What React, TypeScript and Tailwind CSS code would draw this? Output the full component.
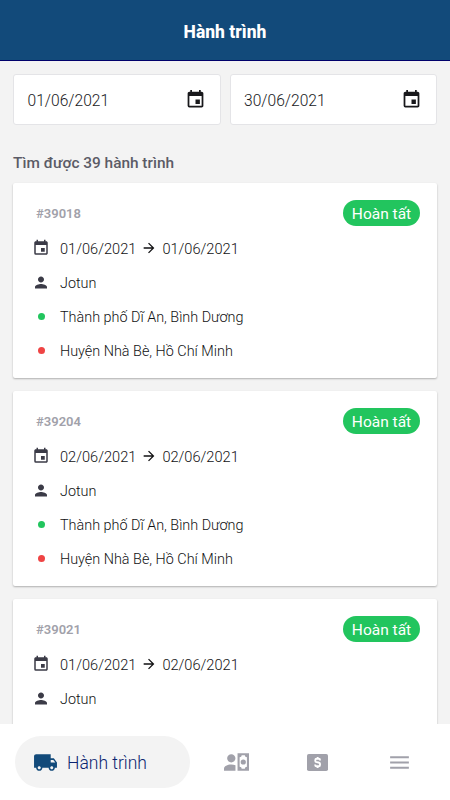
import React from 'react';
import { MdArrowForward, MdEvent, MdLocalShipping, MdMenu, MdPerson } from 'react-icons/md';

interface Trip {
  id: string;
  startDate: string;
  endDate: string;
  customer: string;
  from?: string;
  to?: string;
  status: string;
}

const trips: Trip[] = [
  {
    id: '39018',
    startDate: '01/06/2021',
    endDate: '01/06/2021',
    customer: 'Jotun',
    from: 'Thành phố Dĩ An, Bình Dương',
    to: 'Huyện Nhà Bè, Hồ Chí Minh',
    status: 'Hoàn tất',
  },
  {
    id: '39204',
    startDate: '02/06/2021',
    endDate: '02/06/2021',
    customer: 'Jotun',
    from: 'Thành phố Dĩ An, Bình Dương',
    to: 'Huyện Nhà Bè, Hồ Chí Minh',
    status: 'Hoàn tất',
  },
  {
    id: '39021',
    startDate: '01/06/2021',
    endDate: '02/06/2021',
    customer: 'Jotun',
    status: 'Hoàn tất',
  },
];

const AccountCashIcon: React.FC<{ className?: string }> = ({ className }) => (
  <svg viewBox="0 0 24 24" fill="currentColor" fillRule="evenodd" className={className}>
    <path d="M11 8C11 10.21 9.21 12 7 12S3 10.21 3 8s1.79-4 4-4 4 1.79 4 4M11 14.72V20H0v-2c0-2.21 3.13-4 7-4 1.5 0 2.87.27 4 .72M24 20H13V3h11v17m-8-8.5a2.5 2.5 0 0 1 5 0 2.5 2.5 0 0 1-5 0M22 7a2 2 0 0 1-2-2h-3a2 2 0 0 1-2 2v9a2 2 0 0 1 2 2h3a2 2 0 0 1 2-2V7z" />
  </svg>
);

const DollarBoxIcon: React.FC<{ className?: string }> = ({ className }) => (
  <svg viewBox="0 0 21 17" className={className}>
    <rect width="21" height="17" rx="1.8" fill="currentColor" />
    <path
      d="M13 6.5V5.9C13 5.1 12.5 4.7 11.7 4.7H9.7C8.8 4.7 8.3 5.2 8.3 5.9V6.9C8.3 7.7 8.8 8 9.7 8.1L11.5 8.5C12.5 8.7 13 9.1 13 9.9V10.9C13 11.8 12.4 12.2 11.6 12.2H9.7C8.8 12.2 8.2 11.8 8.2 10.9V10.4M10.6 3V5M10.6 12V14"
      fill="none"
      stroke="white"
      strokeWidth="1.9"
    />
  </svg>
);

const DateField: React.FC<{ value: string }> = ({ value }) => (
  <button className="flex h-[51px] flex-1 items-center justify-between rounded-[3px] border border-[#e4e4e7] bg-white pr-3.5 pl-[13.5px] text-[15.6px] font-[350] text-[#18181b]">
    <span className="pt-[4px]">{value}</span>
    <MdEvent className="size-[21px]" />
  </button>
);

const Row: React.FC<{ icon: React.ReactNode; children: React.ReactNode }> = ({ icon, children }) => (
  <div className="flex h-[34px] items-center">
    <span className="mr-[10px] flex w-[18px] shrink-0 justify-center text-[#3b3b47]">{icon}</span>
    <div className="flex items-center pt-[4px]">{children}</div>
  </div>
);

const TripCard: React.FC<{ trip: Trip }> = ({ trip }) => (
  <div className="h-[195px] shrink-0 rounded-[2px] bg-white pt-[17px] pr-[17px] pl-[19px] text-[14.4px] font-[350] text-[#111113] shadow-[0_1px_2px_rgba(0,0,0,0.28)]">
    <div className="mb-[5px] flex h-[26px] items-center justify-between">
      <span className="ml-1 pt-[2px] text-[13px] font-semibold text-[#a1a1aa]">#{trip.id}</span>
      <span className="flex h-[26px] w-[77px] items-center justify-center rounded-full bg-[#22c55e] pt-[3px] text-[15.5px] font-normal text-white">
        {trip.status}
      </span>
    </div>
    <Row icon={<MdEvent className="size-[18px]" />}>
      <span className="text-[14.6px]">{trip.startDate}</span>
      <MdArrowForward className="mx-[5px] mb-[3px] size-4" />
      <span className="text-[14.6px]">{trip.endDate}</span>
    </Row>
    <Row icon={<MdPerson className="size-[19px]" />}>{trip.customer}</Row>
    {trip.from && <Row icon={<span className="size-[7px] rounded-full bg-[#22c55e]" />}>{trip.from}</Row>}
    {trip.to && <Row icon={<span className="size-[7px] rounded-full bg-[#ef4444]" />}>{trip.to}</Row>}
  </div>
);

const App: React.FC = () => {
  return (
    <div className="flex h-[800px] w-[450px] flex-col overflow-hidden bg-[#f3f3f3] font-['Roboto',sans-serif]">
      <header className="flex h-[61px] shrink-0 items-center justify-center border-b border-[#00006b] bg-[#124a7a] pt-1">
        <h1 className="text-[17.5px] font-extrabold text-white">Hành trình</h1>
      </header>

      <main className="flex min-h-0 flex-1 flex-col overflow-hidden px-[13px] pt-[13px]">
        <div className="flex shrink-0 gap-[9px]">
          <DateField value="01/06/2021" />
          <DateField value="30/06/2021" />
        </div>
        <h2 className="mt-[27px] mb-[9px] h-[22px] shrink-0 text-[15.4px] leading-[22px] font-medium text-[#5b5b66]">
          Tìm được 39 hành trình
        </h2>
        <div className="flex flex-col gap-[13px]">
          {trips.map((trip) => (
            <TripCard key={trip.id} trip={trip} />
          ))}
        </div>
      </main>

      <nav className="z-10 flex h-[76px] shrink-0 items-center bg-white pl-[15px] text-[#a1a1aa]">
        <button className="flex h-[52px] w-[175px] items-center rounded-full bg-[#f3f3f3] pl-[18px] text-[17.5px] text-[#124a7a]">
          <MdLocalShipping className="mr-[9px] size-[25px]" />
          <span className="pt-[3px] font-[350] text-[#0a2470]">Hành trình</span>
        </button>
        <AccountCashIcon className="ml-[34px] size-[25px]" />
        <DollarBoxIcon className="ml-[58px] h-[17px] w-[21px]" />
        <MdMenu className="ml-[59px] size-[25px]" />
      </nav>
    </div>
  );
};

export default App;
